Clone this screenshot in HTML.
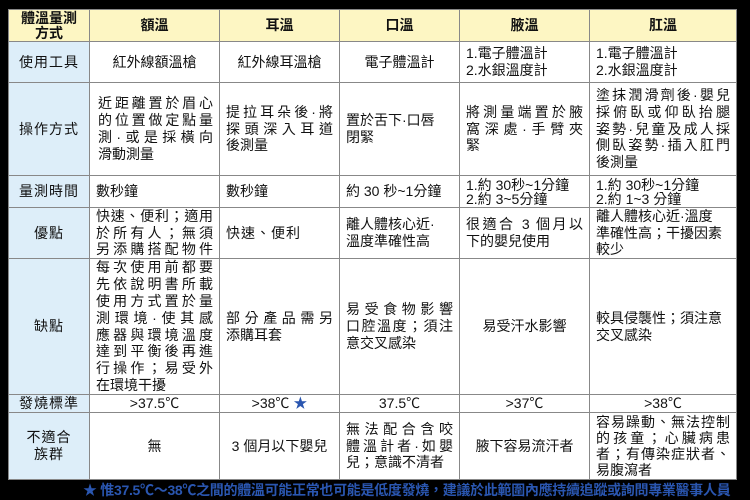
<!DOCTYPE html>
<html><head><meta charset="utf-8"><style>
body{margin:0;width:750px;height:500px;background:#000;overflow:hidden;font-family:"Liberation Sans","Noto Sans CJK TC",sans-serif;}
.c{position:absolute;box-sizing:border-box;background:#fff;border:1px solid #888;font-size:14px;line-height:16.8px;color:#111;display:flex;flex-direction:column;justify-content:center;padding:0 6px;}
.h{background:#fdf6c3;font-weight:bold;align-items:center;text-align:center;}
.f{background:#ddeef9;align-items:center;text-align:center;letter-spacing:1px;}
.m{align-items:center;text-align:center;}
.j div{text-align-last:justify;text-align:justify;}
.foot{position:absolute;left:83px;top:480px;font-size:14px;font-weight:bold;color:#2a56b0;white-space:nowrap;letter-spacing:-0.3px;}
</style></head><body>
<div class="c h" style="left:8px;top:9px;width:82px;height:33px;line-height:15px">體溫量測<br>方式</div>
<div class="c h" style="left:89px;top:9px;width:131px;height:33px">額溫</div>
<div class="c h" style="left:219px;top:9px;width:121px;height:33px">耳溫</div>
<div class="c h" style="left:339px;top:9px;width:121px;height:33px">口溫</div>
<div class="c h" style="left:459px;top:9px;width:131px;height:33px">腋溫</div>
<div class="c h" style="left:589px;top:9px;width:148px;height:33px">肛溫</div>
<div class="c f" style="left:8px;top:41px;width:82px;height:42px">使用工具</div>
<div class="c m" style="left:89px;top:41px;width:131px;height:42px">紅外線額溫槍</div>
<div class="c m" style="left:219px;top:41px;width:121px;height:42px">紅外線耳溫槍</div>
<div class="c m" style="left:339px;top:41px;width:121px;height:42px">電子體溫計</div>
<div class="c" style="left:459px;top:41px;width:131px;height:42px"><span>1.電子體溫計<br>2.水銀溫度計</span></div>
<div class="c" style="left:589px;top:41px;width:148px;height:42px"><span>1.電子體溫計<br>2.水銀溫度計</span></div>
<div class="c f" style="left:8px;top:82px;width:82px;height:94px">操作方式</div>
<div class="c j" style="left:89px;top:82px;width:131px;height:94px;padding:0 6px 0 8px"><div>近距離置於眉心</div><div>的位置做定點量</div><div>測·或是採橫向</div><div style="text-align-last:left">滑動測量</div></div>
<div class="c j" style="left:219px;top:82px;width:121px;height:94px"><div>提拉耳朵後·將</div><div>探頭深入耳道</div><div style="text-align-last:left">後測量</div></div>
<div class="c" style="left:339px;top:82px;width:121px;height:94px"><span>置於舌下·口唇<br>閉緊</span></div>
<div class="c j" style="left:459px;top:82px;width:131px;height:94px"><div>將測量端置於腋</div><div>窩深處·手臂夾</div><div style="text-align-last:left">緊</div></div>
<div class="c j" style="left:589px;top:82px;width:148px;height:94px"><div>塗抹潤滑劑後·嬰兒</div><div>採俯臥或仰臥抬腿</div><div>姿勢·兒童及成人採</div><div>側臥姿勢·插入肛門</div><div style="text-align-last:left">後測量</div></div>
<div class="c f" style="left:8px;top:175px;width:82px;height:33px">量測時間</div>
<div class="c" style="left:89px;top:175px;width:131px;height:33px">數秒鐘</div>
<div class="c" style="left:219px;top:175px;width:121px;height:33px">數秒鐘</div>
<div class="c" style="left:339px;top:175px;width:121px;height:33px">約 30 秒~1分鐘</div>
<div class="c" style="left:459px;top:175px;width:131px;height:33px;line-height:14px"><span>1.約 30秒~1分鐘<br>2.約 3~5分鐘</span></div>
<div class="c" style="left:589px;top:175px;width:148px;height:33px;line-height:14px"><span>1.約 30秒~1分鐘<br>2.約 1~3 分鐘</span></div>
<div class="c f" style="left:8px;top:207px;width:82px;height:52px">優點</div>
<div class="c j" style="left:89px;top:207px;width:131px;height:52px"><div>快速、便利；適用</div><div>於所有人；無須</div><div>另添購搭配物件</div></div>
<div class="c" style="left:219px;top:207px;width:121px;height:52px;letter-spacing:1px">快速、便利</div>
<div class="c" style="left:339px;top:207px;width:121px;height:52px"><span>離人體核心近·<br>溫度準確性高</span></div>
<div class="c j" style="left:459px;top:207px;width:131px;height:52px"><div>很適合 3 個月以</div><div style="text-align-last:left">下的嬰兒使用</div></div>
<div class="c" style="left:589px;top:207px;width:148px;height:52px"><span>離人體核心近·溫度<br>準確性高；干擾因素<br>較少</span></div>
<div class="c f" style="left:8px;top:258px;width:82px;height:137px">缺點</div>
<div class="c j" style="left:89px;top:258px;width:131px;height:137px"><div>每次使用前都要</div><div>先依說明書所載</div><div>使用方式置於量</div><div>測環境·使其感</div><div>應器與環境溫度</div><div>達到平衡後再進</div><div>行操作；易受外</div><div style="text-align-last:left">在環境干擾</div></div>
<div class="c j" style="left:219px;top:258px;width:121px;height:137px"><div>部分產品需另</div><div style="text-align-last:left">添購耳套</div></div>
<div class="c j" style="left:339px;top:258px;width:121px;height:137px"><div>易受食物影響</div><div>口腔溫度；須注</div><div style="text-align-last:left">意交叉感染</div></div>
<div class="c m" style="left:459px;top:258px;width:131px;height:137px">易受汗水影響</div>
<div class="c" style="left:589px;top:258px;width:148px;height:137px"><span>較具侵襲性；須注意<br>交叉感染</span></div>
<div class="c f" style="left:8px;top:394px;width:82px;height:19px">發燒標準</div>
<div class="c m" style="left:89px;top:394px;width:131px;height:19px">&gt;37.5℃</div>
<div class="c m" style="left:219px;top:394px;width:121px;height:19px"><span style="white-space:nowrap">&gt;38℃ <span style="color:#2a56b0">★</span></span></div>
<div class="c m" style="left:339px;top:394px;width:121px;height:19px">37.5℃</div>
<div class="c m" style="left:459px;top:394px;width:131px;height:19px">&gt;37℃</div>
<div class="c m" style="left:589px;top:394px;width:148px;height:19px">&gt;38℃</div>
<div class="c f" style="left:8px;top:412px;width:82px;height:68px"><span>不適合<br>族群</span></div>
<div class="c m" style="left:89px;top:412px;width:131px;height:68px">無</div>
<div class="c m" style="left:219px;top:412px;width:121px;height:68px">3 個月以下嬰兒</div>
<div class="c j" style="left:339px;top:412px;width:121px;height:68px"><div>無法配合含咬</div><div>體溫計者·如嬰</div><div style="text-align-last:left">兒；意識不清者</div></div>
<div class="c m" style="left:459px;top:412px;width:131px;height:68px">腋下容易流汗者</div>
<div class="c j" style="left:589px;top:412px;width:148px;height:68px;line-height:16px"><div>容易躁動、無法控制</div><div>的孩童；心臟病患</div><div>者；有傳染症狀者、</div><div style="text-align-last:left">易腹瀉者</div></div>
<div class="foot">★ 惟37.5℃～38℃之間的體溫可能正常也可能是低度發燒，建議於此範圍內應持續追蹤或詢問專業醫事人員</div>
</body></html>
